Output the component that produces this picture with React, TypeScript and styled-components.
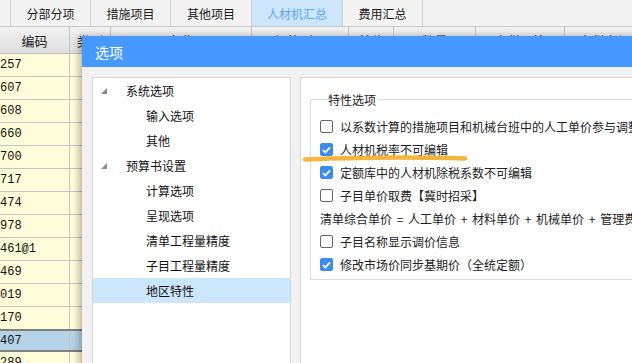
import { FC } from "react";
import styled, { createGlobalStyle } from "styled-components";

const GlobalStyle = createGlobalStyle`
  html, body {
    margin: 0;
    padding: 0;
    background: #f3f3f3;
  }
  body {
    font-family: "Noto Sans CJK SC", "Noto Sans", sans-serif;
    font-size: 12px;
    color: #1a1a1a;
  }
`;

const Page = styled.div`
  position: relative;
  width: 632px;
  height: 363px;
  overflow: hidden;
  background: #f3f3f3;
`;

const TabBar = styled.div`
  display: flex;
  height: 26px;
  background: #f3f3f3;
  border-bottom: 1px solid #c9c9c9;
`;

const Tab = styled.div<{ $active?: boolean; $w: number }>`
  width: ${(p) => p.$w}px;
  flex-shrink: 0;
  display: flex;
  align-items: center;
  justify-content: center;
  box-sizing: border-box;
  border-right: 1px solid #cfcfcf;
  background: ${(p) => (p.$active ? "#cde6fb" : "transparent")};
  color: ${(p) => (p.$active ? "#5ba8f3" : "#1a1a1a")};
`;

const HeaderRow = styled.div`
  display: flex;
  height: 26px;
  background: linear-gradient(#f2f2f2, #dedede);
  border-bottom: 1px solid #c0c0c0;
`;

const HeadCell = styled.div<{ $w: number }>`
  width: ${(p) => p.$w}px;
  flex-shrink: 0;
  box-sizing: border-box;
  border-right: 1px solid #c4c4c4;
  display: flex;
  align-items: center;
  justify-content: center;
  font-size: 13px;
`;

const Row = styled.div<{ $sel?: boolean }>`
  display: flex;
  height: 23px;
  box-sizing: border-box;
  background: ${(p) => (p.$sel ? "#b4d3e6" : "#fffcd9")};
  border-bottom: ${(p) => (p.$sel ? "2px solid #7f7f7f" : "1px solid #c4c4c4")};
  ${(p) => (p.$sel ? "border-top: 2px solid #7f7f7f; margin-top: -1px;" : "")}
`;

const Cell = styled.div<{ $w: number }>`
  width: ${(p) => p.$w}px;
  flex-shrink: 0;
  box-sizing: border-box;
  border-right: 1px solid #c4c4c4;
  display: flex;
  align-items: center;
  font-family: "Liberation Mono", monospace;
  font-size: 12px;
  color: #111;
`;

const Dialog = styled.div`
  position: absolute;
  left: 82px;
  top: 36px;
  width: 600px;
  height: 360px;
  background: #f2f2f2;
  box-shadow: -3px 0 7px rgba(0, 0, 0, 0.28);
  display: flex;
  flex-direction: column;
`;

const TitleBar = styled.div`
  height: 31px;
  background: #4599ff;
  color: #fff;
  font-size: 14px;
  display: flex;
  align-items: center;
  padding-left: 13px;
  flex-shrink: 0;
`;

const Body = styled.div`
  position: relative;
  flex: 1;
  display: flex;
  gap: 9px;
  padding: 10px 0 0 10px;
`;

const Panel = styled.div<{ $w?: number }>`
  ${(p) => (p.$w ? `width: ${p.$w}px; flex-shrink: 0;` : "flex: 1;")}
  box-sizing: border-box;
  background: #fff;
  border: 1px solid #d6d6d6;
`;

const TreeItem = styled.div<{ $level: number; $sel?: boolean }>`
  height: 25px;
  display: flex;
  align-items: center;
  position: relative;
  padding-left: ${(p) => (p.$level === 0 ? 33 : 53)}px;
  background: ${(p) => (p.$sel ? "#cce6fb" : "transparent")};
  color: #111;
`;

const Arrow = styled.span`
  position: absolute;
  left: 8px;
  top: 10px;
  width: 0;
  height: 0;
  border-left: 6px solid transparent;
  border-bottom: 6px solid #8a8a8a;
`;

const RightInner = styled.div`
  padding: 13px 0 0 9px;
`;

const Group = styled.fieldset`
  margin: 0;
  padding: 7px 0 3px 9px;
  border: 1px solid #dcdcdc;
  border-right: none;
  min-width: 0;
`;

const Legend = styled.legend`
  padding: 0 2px 0 0;
  margin-left: 8px;
  color: #222;
  font-size: 12px;
`;

const OptionRow = styled.div`
  height: 23px;
  display: flex;
  align-items: center;
  white-space: nowrap;
  color: #222;
`;

const Formula = styled.span`
  word-spacing: 2px;
`;

const Box = styled.span<{ $on?: boolean }>`
  width: 13px;
  height: 13px;
  box-sizing: border-box;
  margin-right: 7px;
  flex-shrink: 0;
  border-radius: 2px;
  border: 1px solid ${(p) => (p.$on ? "#3c8cf0" : "#666")};
  background: ${(p) => (p.$on ? "#3c8cf0" : "#fff")};
  display: flex;
  align-items: center;
  justify-content: center;
`;

const Mark = styled.svg`
  position: absolute;
  left: 220px;
  top: 87px;
  overflow: visible;
`;

const cols = [70, 41, 141, 97, 45, 82, 89, 80];
const heads = ["编码", "类别", "名称", "规格型号", "单位", "数量", "不含税预算价", "不含税市场价"];
const codes = ["257", "607", "608", "660", "700", "717", "474", "978", "461@1", "469", "019", "170", "407", "289"];

const tabs = [
  { t: "", w: 11 },
  { t: "分部分项", w: 80 },
  { t: "措施项目", w: 80 },
  { t: "其他项目", w: 81 },
  { t: "人材机汇总", w: 91, active: true },
  { t: "费用汇总", w: 80 },
];

const tree = [
  { t: "系统选项", l: 0 },
  { t: "输入选项", l: 1 },
  { t: "其他", l: 1 },
  { t: "预算书设置", l: 0 },
  { t: "计算选项", l: 1 },
  { t: "呈现选项", l: 1 },
  { t: "清单工程量精度", l: 1 },
  { t: "子目工程量精度", l: 1 },
  { t: "地区特性", l: 1, sel: true },
];

const options: { t: string; box?: boolean; on?: boolean }[] = [
  { t: "以系数计算的措施项目和机械台班中的人工单价参与调整", box: true },
  { t: "人材机税率不可编辑", box: true, on: true },
  { t: "定额库中的人材机除税系数不可编辑", box: true, on: true },
  { t: "子目单价取费【冀时招采】", box: true },
  { t: "清单综合单价 = 人工单价 + 材料单价 + 机械单价 + 管理费 + 利润" },
  { t: "子目名称显示调价信息", box: true },
  { t: "修改市场价同步基期价（全统定额）", box: true, on: true },
];

const Check: FC<{ on?: boolean }> = ({ on }) => (
  <Box $on={on}>
    {on && (
      <svg width="9" height="8" viewBox="0 0 9 8">
        <path d="M1 4.2 L3.4 6.4 L8 1.4" fill="none" stroke="#fff" strokeWidth="1.8" />
      </svg>
    )}
  </Box>
);

const App: FC = () => (
  <Page>
    <GlobalStyle />
    <TabBar>
      {tabs.map((tab, i) => (
        <Tab key={i} $w={tab.w} $active={tab.active}>
          {tab.t}
        </Tab>
      ))}
    </TabBar>
    <HeaderRow>
      {heads.map((h, i) => (
        <HeadCell key={h} $w={cols[i]}>
          {h}
        </HeadCell>
      ))}
    </HeaderRow>
    {codes.map((c) => (
      <Row key={c} $sel={c === "407"}>
        {cols.map((w, i) => (
          <Cell key={i} $w={w}>
            {i === 0 ? c : ""}
          </Cell>
        ))}
      </Row>
    ))}

    <Dialog>
      <TitleBar>选项</TitleBar>
      <Body>
        <Panel $w={199}>
          {tree.map((n) => (
            <TreeItem key={n.t} $level={n.l} $sel={n.sel}>
              {n.l === 0 && <Arrow />}
              {n.t}
            </TreeItem>
          ))}
        </Panel>
        <Panel>
          <RightInner>
            <Group>
              <Legend>特性选项</Legend>
              {options.map((o) => (
                <OptionRow key={o.t}>
                  {o.box ? <Check on={o.on} /> : null}
                  {o.box ? o.t : <Formula>{o.t}</Formula>}
                </OptionRow>
              ))}
            </Group>
          </RightInner>
        </Panel>
        <Mark width="166" height="10">
          <path
            d="M3 5.5 C 40 3.5, 110 3, 163 4.5"
            fill="none"
            stroke="#f8b53b"
            strokeWidth="4.5"
            strokeLinecap="round"
          />
        </Mark>
      </Body>
    </Dialog>
  </Page>
);

export default App;
